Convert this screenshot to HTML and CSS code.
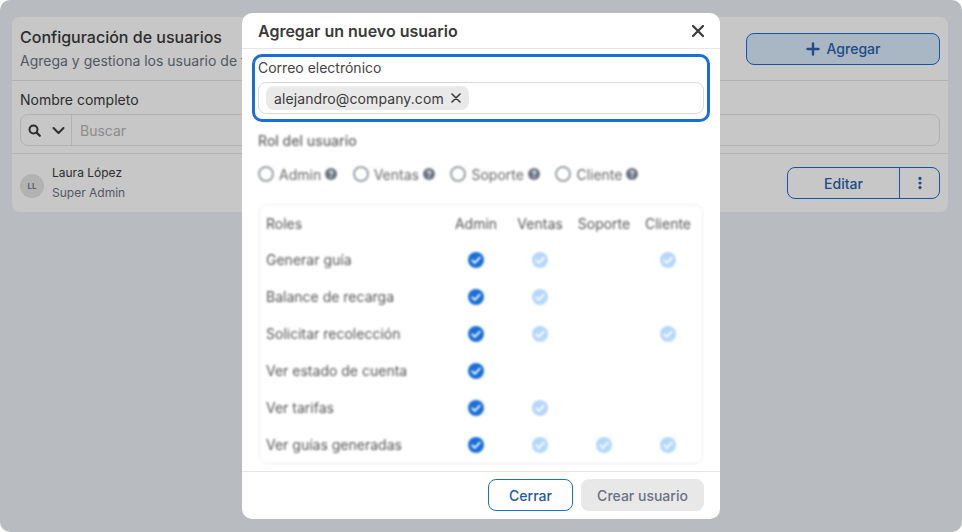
FILE: index.html
```html
<!DOCTYPE html>
<html lang="es">
<head>
    <meta charset="UTF-8">
    <meta name="viewport" content="width=device-width, initial-scale=1.0">
    <title>Configuración de usuarios</title>
    <link rel="stylesheet" href="styles.css">
</head>
<body>
    <svg class="sprites" width="0" height="0">
        <symbol id="check" viewBox="0 0 16 16">
            <circle cx="8" cy="8" r="8" fill="currentColor"/>
            <path d="M4.2 8.4l2.6 2.4 5-5.2" fill="none" stroke="#fff" stroke-width="1.8" stroke-linecap="round" stroke-linejoin="round"/>
        </symbol>
        <symbol id="help" viewBox="0 0 12 12">
            <circle cx="6" cy="6" r="6" fill="currentColor"/>
            <path d="M4.4 4.7C4.5 3.7 5.2 3.2 6 3.2c.9 0 1.6.6 1.6 1.4 0 1.2-1.6 1.2-1.6 2.4" fill="none" stroke="#fff" stroke-width="1.2"/>
            <circle cx="6" cy="8.9" r=".8" fill="#fff"/>
        </symbol>
    </svg>

    <div class="screen">
        <section class="card">
            <div class="card-head">
                <div class="card-title">
                    <h1>Configuración de usuarios</h1>
                    <p>Agrega y gestiona los usuario de t</p>
                </div>
                <button class="button button-add">
                    <svg width="14" height="14" viewBox="0 0 14 14"><path d="M7 1.5v11M1.5 7h11" stroke="currentColor" stroke-width="2.4" stroke-linecap="round"/></svg>
                    Agregar
                </button>
            </div>
            <div class="filter">
                <label class="filter-label">Nombre completo</label>
                <div class="search">
                    <div class="search-type">
                        <svg width="13" height="13" viewBox="0 0 13 13"><circle cx="5.5" cy="5.5" r="4" fill="none" stroke="currentColor" stroke-width="2"/><path d="M8.6 8.6l3.2 3.2" stroke="currentColor" stroke-width="2.2" stroke-linecap="round"/></svg>
                        <svg width="13" height="13" viewBox="0 0 13 13"><path d="M1.5 4l5 5 5-5" fill="none" stroke="currentColor" stroke-width="2" stroke-linecap="round" stroke-linejoin="round"/></svg>
                    </div>
                    <span class="search-text">Buscar</span>
                </div>
            </div>
            <div class="user-row">
                <div class="avatar">LL</div>
                <div class="user-info">
                    <span class="user-name">Laura López</span>
                    <span class="user-role">Super Admin</span>
                </div>
                <div class="split-button">
                    <span class="split-main">Editar</span>
                    <span class="split-more">
                        <svg width="4" height="14" viewBox="0 0 4 14"><circle cx="2" cy="2.4" r="1.6" fill="currentColor"/><circle cx="2" cy="7" r="1.6" fill="currentColor"/><circle cx="2" cy="11.6" r="1.6" fill="currentColor"/></svg>
                    </span>
                </div>
            </div>
        </section>

        <div class="backdrop">
            <div class="modal">
                <div class="modal-head">
                    <h2>Agregar un nuevo usuario</h2>
                    <svg class="modal-close" width="12" height="12" viewBox="0 0 12 12"><path d="M1 1l10 10M11 1L1 11" stroke="currentColor" stroke-width="2.2" stroke-linecap="round"/></svg>
                </div>

                <div class="email-box">
                    <label class="email-label">Correo electrónico</label>
                    <div class="email-input">
                        <span class="chip">
                            alejandro@company.com
                            <svg width="10" height="10" viewBox="0 0 10 10"><path d="M1 1l8 8M9 1L1 9" stroke="currentColor" stroke-width="1.6" stroke-linecap="round"/></svg>
                        </span>
                    </div>
                </div>

                <div class="modal-blur">
                    <div class="role-title">Rol del usuario</div>
                    <div class="radios">
                        <div class="radio"><i></i>Admin<svg class="help"><use href="#help"/></svg></div>
                        <div class="radio"><i></i>Ventas<svg class="help"><use href="#help"/></svg></div>
                        <div class="radio"><i></i>Soporte<svg class="help"><use href="#help"/></svg></div>
                        <div class="radio"><i></i>Cliente<svg class="help"><use href="#help"/></svg></div>
                    </div>

                    <div class="roles">
                        <div class="roles-row">
                            <span>Roles</span><span class="col">Admin</span><span class="col">Ventas</span><span class="col">Soporte</span><span class="col">Cliente</span>
                        </div>
                        <div class="roles-row">
                            <span>Generar guía</span>
                            <span class="col"><svg class="tick"><use href="#check"/></svg></span>
                            <span class="col"><svg class="tick tick-light"><use href="#check"/></svg></span>
                            <span class="col"></span>
                            <span class="col"><svg class="tick tick-light"><use href="#check"/></svg></span>
                        </div>
                        <div class="roles-row">
                            <span>Balance de recarga</span>
                            <span class="col"><svg class="tick"><use href="#check"/></svg></span>
                            <span class="col"><svg class="tick tick-light"><use href="#check"/></svg></span>
                            <span class="col"></span>
                            <span class="col"></span>
                        </div>
                        <div class="roles-row">
                            <span>Solicitar recolección</span>
                            <span class="col"><svg class="tick"><use href="#check"/></svg></span>
                            <span class="col"><svg class="tick tick-light"><use href="#check"/></svg></span>
                            <span class="col"></span>
                            <span class="col"><svg class="tick tick-light"><use href="#check"/></svg></span>
                        </div>
                        <div class="roles-row">
                            <span>Ver estado de cuenta</span>
                            <span class="col"><svg class="tick"><use href="#check"/></svg></span>
                            <span class="col"></span>
                            <span class="col"></span>
                            <span class="col"></span>
                        </div>
                        <div class="roles-row">
                            <span>Ver tarifas</span>
                            <span class="col"><svg class="tick"><use href="#check"/></svg></span>
                            <span class="col"><svg class="tick tick-light"><use href="#check"/></svg></span>
                            <span class="col"></span>
                            <span class="col"></span>
                        </div>
                        <div class="roles-row">
                            <span>Ver guías generadas</span>
                            <span class="col"><svg class="tick"><use href="#check"/></svg></span>
                            <span class="col"><svg class="tick tick-light"><use href="#check"/></svg></span>
                            <span class="col"><svg class="tick tick-light"><use href="#check"/></svg></span>
                            <span class="col"><svg class="tick tick-light"><use href="#check"/></svg></span>
                        </div>
                    </div>
                </div>

                <div class="modal-foot">
                    <button class="button button-close">Cerrar</button>
                    <button class="button button-create">Crear usuario</button>
                </div>
            </div>
        </div>
    </div>
</body>
</html>
```

FILE: styles.css
```css
* {
    box-sizing: border-box;
}
body {
    margin: 0;
    background-color: #fff;
    font-family: Inter, "Liberation Sans", sans-serif;
    color: #3a3a3a;
}
h1, h2, p {
    margin: 0;
}
.sprites {
    display: block;
    height: 0;
}
.screen {
    position: relative;
    width: 962px;
    height: 532px;
    padding: 17px 14px 0 12px;
    border-radius: 10px;
    overflow: hidden;
    background-color: #ecf0f5;
}
.button {
    font-family: inherit;
    font-size: 14px;
    font-weight: 500;
    border-radius: 8px;
    cursor: pointer;
}

/* page behind the modal */
.card {
    height: 195px;
    background-color: #fff;
    border-radius: 8px;
}
.card-head {
    display: flex;
    justify-content: space-between;
    align-items: center;
    height: 64px;
    padding: 0 8px;
    border-bottom: 1px solid #e4e4e4;
}
.card-title h1 {
    font-size: 16px;
    font-weight: 500;
    line-height: 20px;
    margin-bottom: 4px;
}
.card-title p {
    font-size: 14px;
    line-height: 20px;
    color: #6b7280;
}
.button-add {
    display: flex;
    justify-content: center;
    align-items: center;
    gap: 7px;
    width: 194px;
    height: 32px;
    color: #2a62ad;
    background-color: #d9e9fa;
    border: 1px solid #1a6fd6;
}
.filter {
    height: 73px;
    padding: 9px 8px 0;
    border-bottom: 1px solid #e4e4e4;
}
.filter-label {
    display: block;
    font-size: 14px;
    line-height: 20px;
    margin-bottom: 4px;
}
.search {
    display: flex;
    align-items: center;
    height: 32px;
    border: 1px solid #e4e4e4;
    border-radius: 8px;
}
.search-type {
    display: flex;
    align-items: center;
    gap: 11px;
    width: 51px;
    height: 100%;
    padding-left: 7px;
    border-right: 1px solid #e4e4e4;
    color: #3a3a3a;
}
.search-text {
    padding-left: 8px;
    font-size: 14px;
    color: #b4b4b4;
}
.user-row {
    display: flex;
    align-items: center;
    height: 58px;
    padding: 0 8px;
}
.avatar {
    display: flex;
    justify-content: center;
    align-items: center;
    width: 24px;
    height: 24px;
    margin-top: 6px;
    border-radius: 50%;
    background-color: #e4e4e4;
    font-size: 8px;
    font-weight: 600;
    color: #6b7280;
}
.user-info {
    display: flex;
    flex-direction: column;
    gap: 4px;
    margin-left: 8px;
    flex: 1;
    font-size: 12px;
    line-height: 16px;
}
.user-role {
    color: #6b7280;
}
.split-button {
    display: flex;
    width: 153px;
    height: 32px;
    border: 1px solid #1a6fd6;
    border-radius: 8px;
    color: #2a62ad;
    font-size: 14px;
    font-weight: 500;
}
.split-main {
    display: flex;
    justify-content: center;
    align-items: center;
    flex: 1;
    border-right: 1px solid #1a6fd6;
}
.split-more {
    display: flex;
    justify-content: center;
    align-items: center;
    width: 39px;
}

/* modal */
.backdrop {
    position: absolute;
    inset: 0;
    display: flex;
    justify-content: center;
    align-items: center;
    background-color: rgba(0, 0, 0, 0.22);
}
.modal {
    display: flex;
    flex-direction: column;
    width: 478px;
    height: 506px;
    background-color: #fff;
    border-radius: 10px;
    overflow: hidden;
}
.modal-head {
    display: flex;
    justify-content: space-between;
    align-items: center;
    height: 36px;
    padding: 0 16px;
    border-bottom: 1px solid #e6e6e6;
}
.modal-head h2 {
    font-size: 16px;
    font-weight: 600;
    color: #3a3a3a;
}
.modal-close {
    color: #3a3a3a;
}
.email-box {
    flex: none;
    height: 68px;
    margin: 5px 10px 0;
    padding: 1px 3px 0;
    border: 3px solid #1a6fd6;
    border-radius: 10px;
}
.email-label {
    display: block;
    font-size: 14px;
    line-height: 20px;
    margin-bottom: 4px;
    color: #444;
}
.email-input {
    display: flex;
    align-items: center;
    height: 32px;
    padding: 0 7px;
    border: 1px solid #d9d9d9;
    border-radius: 8px;
}
.chip {
    display: flex;
    align-items: center;
    gap: 7px;
    height: 24px;
    padding: 0 8px;
    border-radius: 8px;
    background-color: #e9e9e9;
    font-size: 14px;
    letter-spacing: 0.1px;
    color: #3a3a3a;
}
.modal-blur {
    flex: 1;
    padding: 9px 17px 0 16px;
    filter: blur(1.2px);
    font-size: 14px;
    color: #555;
}
.role-title {
    line-height: 20px;
    font-weight: 500;
    color: #666;
}
.radios {
    display: flex;
    gap: 15.5px;
    margin-top: 13px;
    height: 20px;
}
.radio {
    display: flex;
    align-items: center;
    color: #666;
}
.radio i {
    width: 16px;
    height: 16px;
    margin-right: 5px;
    border: 2px solid #9aa0a8;
    border-radius: 50%;
}
.help {
    width: 12px;
    height: 12px;
    margin-left: 4px;
    color: #6b7280;
}
.roles {
    margin: 20px 0 0 1px;
    height: 260px;
    border: 1px solid #eeeeee;
    border-radius: 8px;
}
.roles-row {
    display: grid;
    grid-template-columns: 1fr repeat(4, 64px);
    align-items: center;
    height: 37px;
    padding: 0 2px 0 6px;
}
.roles-row:first-child {
    height: 36px;
}
.col {
    display: flex;
    justify-content: center;
    align-items: center;
}
.tick {
    width: 16px;
    height: 16px;
    color: #1a6fd6;
}
.tick-light {
    color: #b5d7fc;
}
.modal-foot {
    display: flex;
    justify-content: flex-end;
    gap: 8px;
    height: 48px;
    padding: 7px 16px 0;
    border-top: 1px solid #e6e6e6;
}
.button-close {
    width: 85px;
    height: 32px;
    color: #1f5aa8;
    background-color: #fff;
    border: 1px solid #1a6fd6;
}
.button-create {
    width: 123px;
    height: 32px;
    color: #6b7280;
    background-color: #e8e8e8;
    border: none;
}
```
